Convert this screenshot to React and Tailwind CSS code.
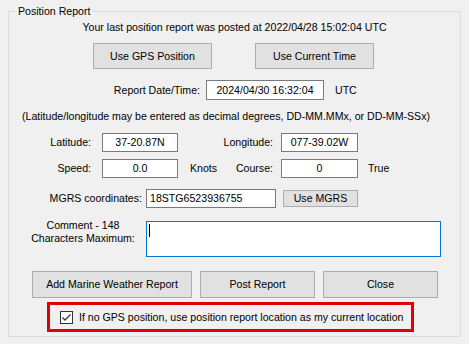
import { useState } from 'react'

function Btn({ className = '', children }) {
    return (
        <button
            type="button"
            className={`flex shrink-0 items-center justify-center border border-[#adadad] bg-[#e1e1e1] text-black ${className}`}
        >
            {children}
        </button>
    )
}

function Box({ className = '', children }) {
    return (
        <div className={`flex shrink-0 items-center border border-[#7a7a7a] bg-white text-black ${className}`}>
            {children}
        </div>
    )
}

export default function App() {
    const [useReportLoc, setUseReportLoc] = useState(true)

    return (
        <div className="h-[344px] w-[469px] overflow-hidden bg-[#f0f0f0] pt-[11px] font-['Liberation_Sans',Arial,sans-serif] text-[10.6px] leading-[13px] text-black">
            <div className="relative ml-[8px] h-[326px] w-[453px] border border-[#dcdcdc]">
                <span className="absolute -top-[7px] left-[7px] bg-[#f0f0f0] px-[2px] leading-[13px]">Position Report</span>

                <div className="mt-[9px] h-[13px] text-center">
                    Your last position report was posted at 2022/04/28 15:02:04 UTC
                </div>

                <div className="mt-[9px] flex">
                    <Btn className="ml-[84px] h-[26px] w-[119px]">Use GPS Position</Btn>
                    <Btn className="ml-[43px] h-[26px] w-[119px]">Use Current Time</Btn>
                </div>

                <div className="mt-[11px] flex items-center">
                    <span className="w-[191px] text-right">Report Date/Time:</span>
                    <Box className="ml-[6px] h-[20px] w-[118px] justify-center">2024/04/30 16:32:04</Box>
                    <span className="ml-[11px]">UTC</span>
                </div>

                <div className="ml-[13px] mt-[10px] h-[13px] whitespace-nowrap">
                    (Latitude/longitude may be entered as decimal degrees, DD-MM.MMx, or DD-MM-SSx)
                </div>

                <div className="mt-[10px] flex items-center">
                    <span className="w-[82px] text-right">Latitude:</span>
                    <Box className="ml-[11px] h-[19px] w-[76px] justify-center">37-20.87N</Box>
                    <span className="w-[95px] text-right">Longitude:</span>
                    <Box className="ml-[8px] h-[19px] w-[77px] justify-center">077-39.02W</Box>
                </div>

                <div className="mt-[7px] flex items-center">
                    <span className="w-[82px] text-right">Speed:</span>
                    <Box className="ml-[11px] h-[19px] w-[76px] justify-center">0.0</Box>
                    <span className="ml-[12px] w-[40px]">Knots</span>
                    <span className="w-[43px] text-right">Course:</span>
                    <Box className="ml-[8px] h-[19px] w-[77px] justify-center">0</Box>
                    <span className="ml-[10px]">True</span>
                </div>

                <div className="mt-[11px] flex items-center">
                    <span className="w-[133px] text-right">MGRS coordinates:</span>
                    <Box className="ml-[4px] h-[19px] w-[130px] pl-[3px]">18STG6523936755</Box>
                    <Btn className="ml-[7px] h-[17px] w-[75px]">Use MGRS</Btn>
                </div>

                <div className="mt-[13px] flex items-start">
                    <div className="-mt-[2px] ml-[19px] w-[110px] text-center">
                        Comment - 148
                        <br />
                        Characters Maximum:
                    </div>
                    <div className="ml-[8px] h-[36px] w-[295px] shrink-0 border border-[#0078d7] bg-white pl-[2px] pt-[2px]">
                        <div className="h-[13px] w-px bg-black" />
                    </div>
                </div>

                <div className="mt-[14px] flex">
                    <Btn className="ml-[23px] h-[27px] w-[160px]">Add Marine Weather Report</Btn>
                    <Btn className="ml-[8px] h-[27px] w-[115px]">Post Report</Btn>
                    <Btn className="ml-[8px] h-[27px] w-[115px]">Close</Btn>
                </div>

                <div className="ml-[38px] mt-[4px] flex h-[30px] w-[367px] items-center border-[3px] border-[#e00000] pl-[10px]">
                    <button
                        type="button"
                        onClick={() => setUseReportLoc(!useReportLoc)}
                        className="flex h-[13px] w-[13px] shrink-0 items-center justify-center border border-[#333333] bg-white"
                    >
                        {useReportLoc && (
                            <svg width="11" height="11" viewBox="0 0 11 11">
                                <path d="M1.5 5.5 L4 8 L9.5 2.5" fill="none" stroke="#333333" strokeWidth="1.3" />
                            </svg>
                        )}
                    </button>
                    <span className="ml-[6px] whitespace-nowrap">If no GPS position, use position report location as my current location</span>
                </div>
            </div>
        </div>
    )
}
